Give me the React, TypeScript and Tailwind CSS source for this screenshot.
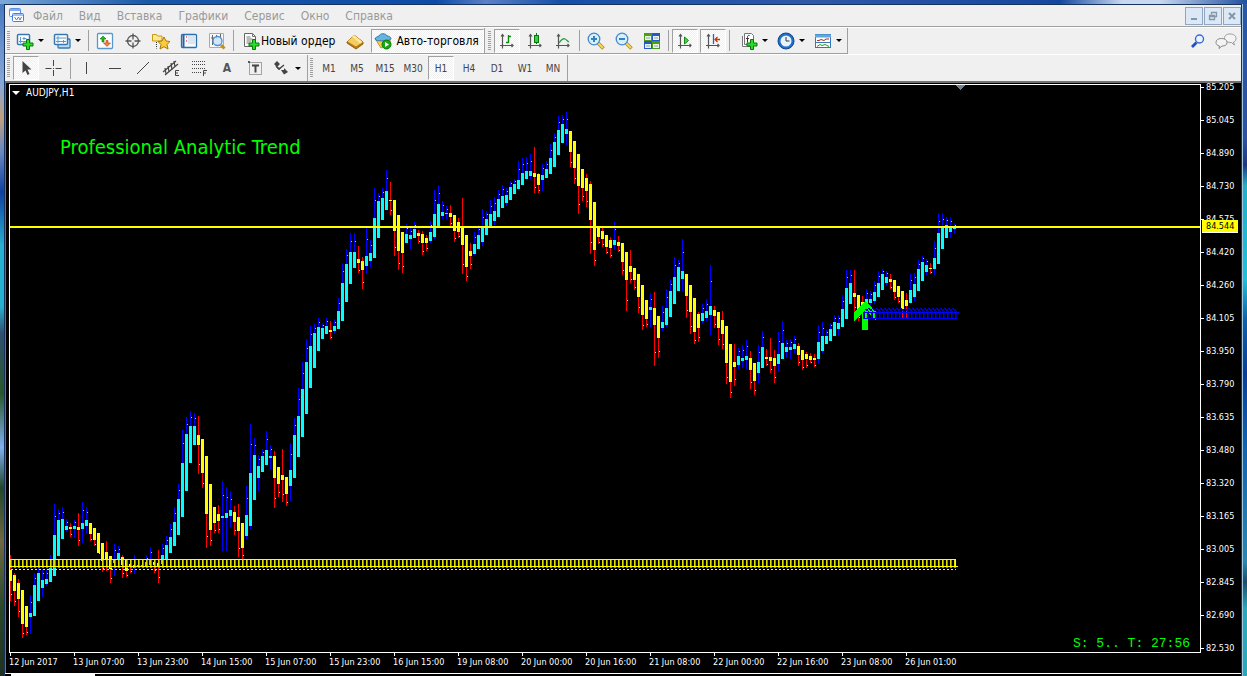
import type { ReactNode } from "react"

// [high, body top, body bottom, low, rising] in chart rows, one bar per 4px
type Bar = [number, number, number, number, 0 | 1]

const BARS: Bar[] = [
  [555, 570, 581, 601, 0], [573, 575, 591, 606, 0], [579, 583, 599, 617, 0], [590, 590, 624, 638, 0],
  [606, 606, 627, 635, 0], [595, 613, 617, 634, 1], [573, 585, 616, 616, 1], [566, 573, 601, 601, 1],
  [569, 580, 588, 597, 1], [569, 579, 584, 586, 1], [555, 568, 582, 582, 1], [504, 535, 576, 576, 1],
  [509, 520, 556, 556, 1], [507, 519, 539, 539, 1], [519, 526, 530, 532, 1], [523, 527, 529, 537, 0],
  [520, 526, 529, 538, 1], [513, 527, 530, 546, 0], [502, 523, 529, 543, 1], [507, 520, 526, 534, 1],
  [523, 523, 534, 541, 0], [528, 528, 540, 546, 0], [533, 533, 553, 553, 0], [543, 543, 561, 572, 0],
  [541, 552, 560, 571, 0], [556, 556, 569, 583, 0], [544, 560, 563, 576, 1], [546, 553, 559, 567, 1],
  [555, 557, 565, 578, 0], [559, 560, 571, 577, 0], [564, 564, 566, 573, 0], [555, 565, 568, 574, 1],
  [563, 565, 567, 567, 1], [561, 565, 567, 568, 1], [555, 562, 566, 567, 1], [547, 560, 565, 565, 1],
  [560, 562, 565, 573, 0], [550, 563, 566, 583, 0], [544, 555, 564, 567, 1], [536, 545, 560, 560, 1],
  [524, 537, 553, 553, 1], [507, 522, 546, 546, 1], [484, 499, 535, 535, 1], [430, 463, 517, 517, 1],
  [417, 434, 491, 491, 1], [411, 426, 463, 463, 1], [413, 426, 445, 445, 1], [416, 435, 445, 474, 0],
  [439, 439, 473, 488, 0], [456, 456, 514, 548, 0], [484, 484, 530, 546, 0], [507, 507, 523, 533, 0],
  [505, 514, 521, 533, 0], [481, 516, 518, 551, 1], [487, 513, 518, 551, 1], [491, 510, 516, 527, 1],
  [506, 512, 522, 535, 0], [504, 517, 531, 557, 0], [523, 523, 548, 559, 0], [486, 515, 536, 539, 1],
  [424, 473, 526, 530, 1], [438, 455, 500, 500, 1], [455, 466, 478, 491, 1], [449, 456, 472, 472, 1],
  [431, 450, 465, 465, 1], [445, 456, 458, 469, 1], [451, 456, 478, 508, 0], [467, 467, 484, 497, 0],
  [449, 475, 480, 502, 0], [477, 477, 494, 506, 0], [443, 470, 486, 501, 1], [418, 435, 478, 478, 1],
  [388, 416, 457, 457, 1], [362, 389, 437, 437, 1], [339, 362, 414, 414, 1], [326, 346, 388, 388, 1],
  [324, 333, 368, 368, 1], [318, 327, 351, 351, 1], [323, 328, 339, 339, 1], [318, 326, 334, 334, 1],
  [321, 330, 332, 339, 0], [319, 326, 331, 334, 1], [298, 311, 329, 329, 1], [263, 283, 321, 321, 1],
  [249, 264, 302, 302, 1], [233, 252, 284, 284, 1], [233, 252, 268, 268, 1], [246, 259, 263, 273, 0],
  [257, 261, 270, 289, 0], [227, 256, 266, 274, 1], [240, 253, 261, 267, 1], [188, 218, 258, 258, 1],
  [193, 201, 238, 238, 1], [188, 198, 220, 220, 1], [170, 191, 210, 210, 1], [182, 200, 201, 215, 0],
  [200, 200, 231, 256, 0], [215, 215, 251, 270, 0], [232, 232, 253, 273, 0], [224, 234, 243, 243, 1],
  [228, 235, 239, 249, 1], [222, 229, 238, 238, 1], [230, 233, 236, 244, 0], [231, 234, 243, 255, 0],
  [235, 238, 243, 251, 0], [221, 232, 241, 243, 1], [190, 214, 237, 239, 1], [185, 204, 226, 226, 1],
  [201, 212, 216, 219, 1], [206, 213, 214, 219, 1], [205, 213, 217, 226, 0], [215, 215, 231, 242, 0],
  [218, 222, 232, 238, 0], [198, 227, 245, 274, 0], [235, 235, 267, 281, 0], [243, 251, 256, 269, 0],
  [232, 244, 254, 255, 1], [225, 235, 249, 249, 1], [209, 228, 242, 246, 1], [211, 219, 235, 235, 1],
  [200, 214, 227, 227, 1], [197, 211, 221, 225, 1], [190, 199, 217, 217, 1], [185, 196, 208, 208, 1],
  [188, 195, 203, 206, 1], [181, 187, 200, 200, 1], [179, 184, 194, 194, 1], [161, 180, 189, 190, 1],
  [158, 173, 185, 185, 1], [157, 171, 179, 180, 1], [154, 171, 176, 179, 1], [147, 173, 177, 193, 0],
  [173, 174, 185, 193, 0], [164, 175, 180, 191, 1], [161, 169, 178, 178, 1], [144, 158, 174, 174, 1],
  [133, 142, 167, 167, 1], [116, 130, 155, 155, 1], [115, 124, 143, 143, 1], [112, 129, 134, 145, 1],
  [131, 131, 152, 167, 0], [141, 141, 168, 184, 0], [154, 154, 186, 214, 0], [169, 169, 188, 201, 0],
  [174, 178, 191, 207, 0], [181, 184, 220, 254, 0], [202, 202, 250, 266, 0], [227, 227, 237, 244, 0],
  [228, 231, 239, 247, 0], [235, 235, 247, 254, 0], [237, 240, 248, 258, 0], [222, 240, 245, 250, 1],
  [236, 242, 246, 252, 0], [243, 243, 262, 275, 0], [252, 252, 280, 311, 0], [250, 266, 272, 283, 0],
  [268, 268, 280, 290, 0], [274, 274, 297, 313, 0], [285, 285, 315, 330, 0], [300, 300, 319, 327, 0],
  [293, 307, 310, 327, 1], [292, 308, 325, 366, 0], [316, 316, 338, 358, 0], [306, 322, 328, 331, 1],
  [289, 308, 325, 327, 1], [279, 291, 317, 317, 1], [257, 277, 304, 304, 1], [260, 267, 291, 291, 1],
  [239, 271, 279, 291, 1], [274, 274, 296, 318, 0], [285, 285, 312, 334, 0], [298, 298, 332, 344, 0],
  [312, 314, 328, 342, 0], [304, 313, 321, 324, 1], [299, 311, 318, 321, 1], [265, 306, 315, 335, 1],
  [306, 310, 316, 328, 0], [312, 312, 328, 345, 0], [311, 320, 334, 349, 0], [326, 326, 363, 384, 0],
  [344, 344, 382, 398, 0], [344, 362, 367, 386, 0], [348, 356, 365, 369, 1], [345, 358, 361, 368, 1],
  [340, 356, 360, 369, 1], [351, 358, 370, 389, 0], [363, 363, 381, 395, 0], [345, 362, 373, 383, 1],
  [331, 347, 368, 368, 1], [349, 357, 359, 366, 0], [338, 357, 361, 373, 0], [350, 358, 366, 383, 0],
  [332, 354, 364, 372, 1], [321, 343, 359, 359, 1], [340, 347, 352, 358, 1], [339, 347, 350, 359, 1],
  [336, 344, 349, 353, 1], [343, 346, 355, 366, 0], [350, 350, 360, 370, 0], [352, 354, 359, 368, 0],
  [353, 356, 360, 363, 0], [354, 358, 360, 367, 0], [325, 342, 359, 364, 1], [322, 336, 351, 353, 1],
  [330, 336, 344, 344, 1], [323, 329, 341, 341, 1], [315, 322, 336, 336, 1], [315, 323, 329, 336, 1],
  [295, 309, 327, 327, 1], [270, 288, 319, 319, 1], [270, 283, 304, 304, 1], [270, 293, 297, 313, 0],
  [295, 295, 309, 321, 0], [296, 302, 310, 310, 0], [289, 299, 305, 305, 1], [291, 299, 303, 308, 1],
  [281, 292, 301, 304, 1], [271, 283, 297, 297, 1], [269, 274, 290, 290, 1], [271, 277, 283, 286, 1],
  [274, 279, 282, 289, 0], [280, 280, 292, 300, 0], [286, 286, 297, 303, 0], [291, 291, 310, 318, 0],
  [293, 300, 306, 318, 0], [274, 290, 303, 304, 1], [273, 284, 297, 301, 1], [260, 269, 291, 291, 1],
  [256, 262, 281, 281, 1], [259, 265, 272, 275, 1], [263, 268, 269, 274, 0], [241, 258, 269, 275, 1],
  [213, 233, 264, 264, 1], [213, 228, 249, 249, 1], [217, 225, 238, 238, 1], [217, 228, 232, 238, 1],
  [223, 228, 229, 234, 1],
]

const PRICES = [
  "85.205", "85.045", "84.890", "84.730", "84.575", "84.420", "84.260", "84.105", "83.950",
  "83.790", "83.635", "83.480", "83.320", "83.165", "83.005", "82.845", "82.690", "82.530",
]

const TIMES = [
  "12 Jun 2017", "13 Jun 07:00", "13 Jun 23:00", "14 Jun 15:00", "15 Jun 07:00",
  "15 Jun 23:00", "16 Jun 15:00", "19 Jun 08:00", "20 Jun 00:00", "20 Jun 16:00",
  "21 Jun 08:00", "22 Jun 00:00", "22 Jun 16:00", "23 Jun 08:00", "26 Jun 01:00",
]

const MENU = ["Файл", "Вид", "Вставка", "Графики", "Сервис", "Окно", "Справка"]
const FRAMES = ["M1", "M5", "M15", "M30", "H1", "H4", "D1", "W1", "MN"]

function Icon({ children, wide }: { children: ReactNode; wide?: boolean }) {
  return (
    <svg viewBox={wide ? "0 0 22 18" : "0 0 18 18"} className={wide ? "h-[18px] w-[22px] shrink-0" : "h-[18px] w-[18px] shrink-0"} fill="none" aria-hidden="true">
      {children}
    </svg>
  )
}

function Caret() {
  return <span className="border-x-3 border-t-3 border-x-transparent border-t-black" />
}

function Grip() {
  return (
    <span className="mx-0.5 h-5 w-[3px] shrink-0 bg-[repeating-linear-gradient(to_bottom,#a0a0a0_0_1px,#f0f0f0_1px_2px)]" />
  )
}

function Separator() {
  return <span className="mx-0.5 h-[21px] w-px shrink-0 bg-[#a0a0a0]" />
}

const PRESSED =
  "border border-t-[#a0a0a0] border-l-[#a0a0a0] border-r-white border-b-white bg-[repeating-conic-gradient(#fff_0_25%,#f0f0f0_0_50%)] bg-[size:2px_2px]"

function Tool({ label, pressed, children }: { label: string; pressed?: boolean; children: ReactNode }) {
  return (
    <button aria-label={label} aria-pressed={pressed} className="flex h-6 w-7 shrink-0 items-center justify-center">
      <span className={`flex h-6 w-[26px] items-center justify-center ${pressed ? PRESSED : ""}`}>{children}</span>
    </button>
  )
}

function DropTool({ label, children }: { label: string; children: ReactNode }) {
  return (
    <button aria-label={label} aria-haspopup="menu" className="flex h-6 w-[37px] shrink-0 items-center gap-1 pl-1">
      {children}
      <Caret />
    </button>
  )
}

const Plus = () => (
  <path d="M10.500 7.500h3v3.500H17v3h-3.500v3.500h-3V14H7v-3h3.500Z" fill="#28dc28" stroke="#087808" />
)

const Axes = () => (
  <g stroke="#555" strokeWidth="1.200">
    <path d="M4.500 3v13.500M2 13.500h13" />
    <path d="M3 4.500l1.500-2 1.500 2M13.500 12l1.500 1.500-1.500 1.500" />
  </g>
)

const Lens = ({ plus }: { plus?: boolean }) => (
  <Icon>
    <path d="M11 11l5.500 5.500" stroke="#b88818" strokeWidth="3.500" />
    <path d="M11 11l5 5" stroke="#f8d860" strokeWidth="1.800" />
    <circle cx="7" cy="7" r="5.800" fill="#d4f0fc" stroke="#4888cc" strokeWidth="1.300" />
    <path d="M4 7h6" stroke="#3880b8" strokeWidth="2" />
    {plus && <path d="M7 4v6" stroke="#3880b8" strokeWidth="2" />}
  </Icon>
)

function MenuBar() {
  return (
    <header className="flex h-[22px] items-center border-b border-[#a0a0a0] pl-1">
      <Icon>
        <rect x=".5" y="1.500" width="11" height="8" rx="1" fill="#fff" stroke="#5a8ee8" />
        <path d="M1 3h10" stroke="#5a8ee8" strokeWidth="1.500" />
        <rect x="3.500" y="6.500" width="11" height="8" rx="1" fill="#fff" stroke="#4680e0" />
        <path d="M4 8h10M5.500 10l2 3 2-3 1.500 3 1.500-3" stroke="#4680e0" />
      </Icon>
      <nav className="flex flex-1 gap-4 pl-[6px] text-[12px] text-[#999]">
        {MENU.map((item) => (
          <a key={item} href="#" className="leading-5">{item}</a>
        ))}
      </nav>
      <div className="flex gap-px">
        <button aria-label="Свернуть" className="flex h-[18px] w-[18px] items-center justify-center border border-[#8ea6bf] bg-[#dce8f5]">
          <svg viewBox="0 0 10 10" className="h-2.5 w-2.5"><path d="M2 7h6v2H2Z" fill="#8498ac" /></svg>
        </button>
        <button aria-label="Восстановить" className="flex h-[18px] w-[18px] items-center justify-center border border-[#8ea6bf] bg-[#dce8f5]">
          <svg viewBox="0 0 10 10" className="h-2.5 w-2.5" fill="none" stroke="#8498ac" strokeWidth="1.300"><path d="M3.500 3.500V1.500h5v4H7M1.500 4.500h5v4h-5ZM1.500 5.500h5" /></svg>
        </button>
        <button aria-label="Закрыть" className="flex h-[18px] w-[18px] items-center justify-center border border-[#8ea6bf] bg-[#dce8f5]">
          <svg viewBox="0 0 10 10" className="h-2.5 w-2.5"><path d="M2 2l6 6M8 2l-6 6" stroke="#8498ac" strokeWidth="2" /></svg>
        </button>
      </div>
    </header>
  )
}

function MainToolbar() {
  return (
    <div className="flex items-center justify-between border-t border-white">
      <div className="flex h-[26px]">
        <div className="flex items-center border-r border-b border-[#a0a0a0]">
          <Grip />
          <DropTool label="Новый график">
            <Icon>
              <rect x="1.500" y="2.500" width="12" height="10" rx="1" fill="#fff" stroke="#3878b0" strokeWidth="1.500" />
              <path d="M4.500 5v6M3 9.500h8M8 5v3M6.500 6.500h4" stroke="#5898d0" />
              <Plus />
            </Icon>
          </DropTool>
          <DropTool label="Профили">
            <Icon>
              <rect x="5" y="7" width="12" height="9" rx="1" fill="#b8dcf8" stroke="#3878b0" strokeWidth="1.300" />
              <rect x="1.500" y="2.500" width="13" height="10" rx="1" fill="#fff" stroke="#3878b0" strokeWidth="1.500" />
              <path d="M3 6h10M3 9.500h10M5 4v7M10.500 8v3" stroke="#5898d0" />
            </Icon>
          </DropTool>
          <Separator />
          <Tool label="Обзор рынка">
            <Icon>
              <rect x="1.500" y="1.500" width="15" height="15" rx="1" fill="#fff" stroke="#5898d0" strokeWidth="1.300" />
              <path d="M7 4l3 3H8v3H6V7H4Z" fill="#28b428" stroke="#087808" strokeWidth=".6" />
              <path d="M11 14.500l-3.500-3.500H10V8.500h2V11h2.500Z" fill="#f08040" stroke="#c03808" strokeWidth=".6" />
            </Icon>
          </Tool>
          <Tool label="Окно данных">
            <Icon>
              <circle cx="9" cy="9" r="5.500" stroke="#555" strokeWidth="1.300" />
              <path d="M9 1.500v6M9 10.500v6M1.500 9h6M10.500 9h6" stroke="#555" strokeWidth="1.300" />
            </Icon>
          </Tool>
          <Tool label="Навигатор">
            <Icon>
              <path d="M.5 2.500h4l1 1.500H10v5H.5Z" fill="#fce890" stroke="#c89818" />
              <path d="M4.500 10v6.500" stroke="#333" strokeDasharray="1 1" />
              <path d="M12 5l2 4 4 .5-3 3 1 4.500-4-2.300L8 17l1-4.500-3-3 4-.5Z" fill="#fccc38" stroke="#a87808" />
            </Icon>
          </Tool>
          <Tool label="Терминал">
            <Icon>
              <rect x="1.500" y="2.500" width="15" height="13" rx="1" fill="#f4faff" stroke="#2870b0" strokeWidth="1.300" />
              <path d="M3.500 3v12" stroke="#2860a0" strokeWidth="2" />
              <path d="M6 5h1M6 9h1" stroke="#f00" />
              <path d="M8 5h7M8 7h7M8 9h7M8 11h7" stroke="#c8d0dc" />
            </Icon>
          </Tool>
          <Tool label="Тестер стратегий">
            <Icon>
              <path d="M1.500 1.500h14v14h-14Z" fill="#f8f8f8" stroke="#aaa" />
              <path d="M4.500 3v10M3 6h3M12.500 2v5M8.500 3v4" stroke="#666" />
              <path d="M13 13l3.500 3.500" stroke="#c09018" strokeWidth="3" />
              <circle cx="9.500" cy="9" r="4.500" fill="#c8e4fce0" stroke="#5090d0" strokeWidth="1.300" />
            </Icon>
          </Tool>
          <Separator />
          <button className="flex h-6 shrink-0 items-center gap-px px-1.5 text-[12px] text-black">
            <Icon>
              <path d="M2.500 1.500h8l3 3v10h-11Z" fill="#fff" stroke="#666" />
              <path d="M10.500 1.500v3h3M4.500 5h4M4.500 7h6M4.500 9h5M4.500 11h3" stroke="#777" />
              <Plus />
            </Icon>
            Новый ордер
          </button>
          <Tool label="Редактор MetaEditor">
            <Icon>
              <path d="M1 10l7-7 9 7v2L10 17l-9-6Z" fill="#b87c10" stroke="#94600c" />
              <path d="M1.500 9.500l6.500-6.500 8.500 7-6.500 4.500Z" fill="#f4cc60" />
              <path d="M8 3l8.500 7-2.500 1.500-8-7Z" fill="#fce8a0" />
            </Icon>
          </Tool>
          <button aria-pressed="true" className={`ml-0.5 flex h-6 shrink-0 items-center gap-1 px-[2px] text-[12px] text-black ${PRESSED}`}>
            <Icon>
              <path d="M2 8l5 8 9-5V8Z" fill="#f8d048" stroke="#c89018" />
              <path d="M1 7c0-2 3-2 4-3 1-3 7-3 8 0 2 0 4 1 4 3s-16 3-16 0Z" fill="#68b4e0" stroke="#3078a8" />
              <circle cx="12.500" cy="12.500" r="4.500" fill="#18a818" stroke="#087808" />
              <path d="M11 10l4 2.500-4 2.500Z" fill="#fff" />
            </Icon>
            <span className="pr-0.5">Авто-торговля</span>
          </button>
        </div>
        <div className="flex items-center border-r border-b border-[#a0a0a0] pl-px">
          <Grip />
          <Tool label="Бары" pressed>
            <Icon><Axes /><path d="M10.500 3v8M8 10.500h2.500M10.500 4.500H13" stroke="#108810" strokeWidth="1.400" /></Icon>
          </Tool>
          <Tool label="Свечи">
            <Icon><Axes /><path d="M10.500 1v11" stroke="#087808" /><rect x="8.500" y="3.500" width="4" height="7" fill="#30d050" stroke="#087808" /></Icon>
          </Tool>
          <Tool label="Линия">
            <Icon><Axes /><path d="M5 11c2-3 4-5 6-4s2 2 4 3" stroke="#30a040" strokeWidth="1.300" /></Icon>
          </Tool>
          <Separator />
          <Tool label="Увеличить"><Lens plus /></Tool>
          <Tool label="Уменьшить"><Lens /></Tool>
          <Tool label="Расположить окна">
            <Icon>
              <path d="M1 1h8v8H1ZM9 9h8v8H9Z" fill="#4c9c18" />
              <path d="M9 1h8v8H9ZM1 9h8v8H1Z" fill="#2858c8" />
              <path d="M2 4h6v4H2ZM10 4h6v4h-6ZM2 12h6v4H2ZM10 12h6v4h-6Z" fill="#e8f4e8" />
              <path d="M3 6h4M11 6h4M3 14h4M11 14h4" stroke="#88a8b8" />
            </Icon>
          </Tool>
          <Separator />
          <Tool label="Автопрокрутка" pressed>
            <Icon><Axes /><path d="M8.500 5l4 3.500-4 3.500Z" fill="#50d060" stroke="#108810" /></Icon>
          </Tool>
          <Tool label="Сдвиг графика" pressed>
            <Icon><Axes /><path d="M9.500 2v10" stroke="#2868a8" strokeWidth="1.300" /><path d="M16 7.500h-5M13.500 5l-2.500 2.500 2.500 2.500" stroke="#c83808" strokeWidth="1.300" /></Icon>
          </Tool>
          <Separator />
          <span className="w-1" />
          <DropTool label="Индикаторы">
            <Icon>
              <path d="M4.500 1.500h7l2 2v9h-9ZM2.500 4v10.500h8" fill="#fff" stroke="#777" />
              <path d="M9.500 3.500c-2-.5-2 1-2 2v5M6 6.500h3" stroke="#333" />
              <Plus />
            </Icon>
          </DropTool>
          <DropTool label="Периоды">
            <Icon>
              <circle cx="9" cy="9" r="8" fill="#2070c8" stroke="#104890" />
              <circle cx="9" cy="9" r="5.500" fill="#e8f4fc" />
              <path d="M9 5v4h3.500" stroke="#333" />
            </Icon>
          </DropTool>
          <DropTool label="Шаблоны">
            <Icon>
              <rect x="1.500" y="2.500" width="15" height="13" fill="#fff" stroke="#3878b8" />
              <path d="M1 4h16" stroke="#60a8e0" strokeWidth="3" />
              <path d="M2 10.500h14" stroke="#3878b8" />
              <path d="M3 8.500h2l2-1 3 1 2-1.500h3" stroke="#a83018" />
              <path d="M3 14.500l3-2 2 1 3-1 4 2" stroke="#289828" />
            </Icon>
          </DropTool>
        </div>
      </div>
      <div className="flex items-center gap-2 pr-1">
        <button aria-label="Поиск">
          <Icon>
            <path d="M7.500 10.500L3 15" stroke="#2050c0" strokeWidth="2.800" />
            <circle cx="10.500" cy="7" r="4" fill="#eef4ff" stroke="#3868d8" strokeWidth="1.400" />
          </Icon>
        </button>
        <button aria-label="Чат">
          <Icon wide>
            <path d="M15 2c4 0 6 2 6 4.500 0 2-1 3-2.500 3.500l1 3-3-2.500c-5 0-7-1.500-7-4C9.500 4 11 2 15 2Z" fill="#f4f4f4" stroke="#999" />
            <path d="M6.500 6.500c3.500 0 5.500 1.500 5.500 4s-2 3.500-5 3.500L4 16.500 4.500 14C2 13.500 1 12 1 10.500c0-2.500 2-4 5.500-4Z" fill="#f4f4f4" stroke="#888" />
          </Icon>
        </button>
      </div>
    </div>
  )
}

function DrawToolbar() {
  return (
    <div className="flex h-[27px] border-t border-white text-[10px] text-[#444]">
      <div className="flex items-center border-r border-[#a0a0a0] pr-px">
        <Grip />
        <Tool label="Курсор" pressed>
          <Icon><path d="M5.500 2v12l3-2.500 2 4.500 2-1-2-4.500h4Z" fill="#444" /></Icon>
        </Tool>
        <Tool label="Перекрестие">
          <Icon><path d="M8.500 1v6M8.500 11v6M.5 9.500h6M10.500 9.500h6" stroke="#444" /><path d="M8 9h1v1H8Z" fill="#444" /></Icon>
        </Tool>
        <Separator />
        <Tool label="Вертикальная линия"><Icon><path d="M8.500 3v12" stroke="#444" /></Icon></Tool>
        <Tool label="Горизонтальная линия"><Icon><path d="M3 9.500h12" stroke="#444" /></Icon></Tool>
        <Tool label="Трендовая линия"><Icon><path d="M3 15L15 3" stroke="#444" /></Icon></Tool>
        <Tool label="Равноудаленный канал">
          <Icon>
            <path d="M1 13L14 2M3 16L16 5M3 9l1 6M6 7l1 6M9 4l1 7M12 2l1 6" stroke="#444" strokeWidth="1.200" />
            <path d="M17 11.500h-3.500v5H17M13.500 14H16" stroke="#444" />
          </Icon>
        </Tool>
        <Tool label="Линии Фибоначчи">
          <Icon>
            <path d="M2 2.500h14M2 5.500h14M2 9.500h14M2 13.500h9" stroke="#444" strokeDasharray="1 1" />
            <path d="M17 11.500h-3.500V17M13.500 14H16" stroke="#444" />
          </Icon>
        </Tool>
        <Tool label="Текст"><span className="text-[12px] font-bold text-[#555]">A</span></Tool>
        <Tool label="Текстовая метка">
          <Icon>
            <rect x="3.500" y="3.500" width="12" height="12" stroke="#555" strokeDasharray="1 1" />
            <path d="M6 6.500h7M9.500 6v7.500" stroke="#444" strokeWidth="2" />
            <path d="M2 2h2v2H2Z" fill="#555" />
          </Icon>
        </Tool>
        <DropTool label="Стрелки">
          <Icon>
            <path d="M4 2l3 3-3 3-3-3ZM3 8l3 3 2-2" fill="#444" />
            <path d="M3 7l3 3 5-4" stroke="#444" strokeWidth="1.400" />
            <path d="M8 11h3V9l4 4-4 2.500Z" fill="#444" />
          </Icon>
        </DropTool>
      </div>
      <div className="flex items-center border-r border-[#a0a0a0]">
        <Grip />
        {FRAMES.map((f) => (
          <Tool key={f} label={f} pressed={f === "H1"}>{f}</Tool>
        ))}
      </div>
    </div>
  )
}

function Candle({ bar, i }: { bar: Bar; i: number }) {
  const [high, top, bottom, low, up] = bar
  const x = 10 + i * 4
  const closeY = up ? Math.round(high + (top - high) * 0.4) : Math.round(low - (low - bottom) * 0.35)
  return (
    <g>
      <path d={`M${x} ${high}h1V${low}h-1Z`} fill={up ? "#0000ff" : "#ff0000"} />
      <path d={`M${x + 1} ${closeY}h1v1h-1Z`} fill={up ? "#40ffff" : "#ffff40"} />
      <path d={`M${x - 1} ${top}h3V${Math.max(bottom, top + 1)}h-3Z`} fill={up ? "#00ffff" : "#ffff00"} />
    </g>
  )
}

function Plot() {
  return (
    <svg className="block h-[567px] w-full" shapeRendering="crispEdges" role="img" aria-label="AUDJPY, H1">
      <defs>
        <pattern id="support" width="4" height="9" patternUnits="userSpaceOnUse" x="9" y="559">
          <path d="M1 0h1v9H1Z" fill="#e0e000" />
          <path d="M2 0h1v9H2Z" fill="#6a9a00" />
        </pattern>
        <pattern id="zone" width="4" height="6" patternUnits="userSpaceOnUse" x="862" y="312">
          <path d="M1 0h1v6H1Z" fill="#0000ff" />
          <path d="M2 0h1v6H2Z" fill="#000090" />
        </pattern>
        <pattern id="zigzag" width="4" height="4" patternUnits="userSpaceOnUse" x="864" y="308">
          <path d="M0 0h2v1H0ZM1 1h2v1H1ZM2 2h2v1H2ZM0 3h1v1H0ZM3 1h1v1H3Z" fill="#0000c8" />
        </pattern>
      </defs>
      <g transform="translate(-10 -85)">
        {BARS.map((bar, i) => (
          <Candle key={i} bar={bar} i={i} />
        ))}

        {/* Support band */}
        <path d="M10 559h946v8H10Z" fill="url(#support)" />
        <path d="M10 559h946v1H10ZM955 559h1v8h-1Z" fill="#ffff00" />
        <path d="M10 566.500h948" stroke="#ffff00" />
        <path d="M10 567.500h946" stroke="#c07800" strokeDasharray="2 2" />
        <path d="M11 569.500h945" stroke="#ffff00" strokeDasharray="2 2" />

        {/* Buy arrow and entry zone */}
        <path d="M865 301l-11 11v9l8-8v17h6v-17l8 8v-9Z" fill="#00ff00" />
        <path d="M863 312h94v7h-94Z" fill="url(#zone)" />
        <path d="M866 308h90l3 4h-96Z" fill="url(#zigzag)" />
        <path d="M863 312.500h96M863 318.500h94" stroke="#0000ff" />

        <path d="M956 85h9l-4.500 5Z" fill="#708090" />
      </g>
      <rect y="141" width="100%" height="2" fill="#ffff00" />
    </svg>
  )
}

function Chart() {
  return (
    <main className="flex flex-1 border-t-2 border-l border-[#707070] bg-black pt-px pl-[3px] text-[10px] text-white">
      <div className="flex-1">
        <div className="relative border border-white">
          <Plot />
          <div className="absolute top-0 left-0.5 flex items-center gap-1.5 leading-4">
            <span className="border-x-4 border-t-4 border-x-transparent border-t-white" />
            AUDJPY,H1
          </div>
          <p className="absolute top-12 left-[50px] text-[20px] leading-7 text-[#00ff00]">Professional Analytic Trend</p>
          <p className="absolute right-2.5 bottom-0 font-['Liberation_Mono',monospace] text-[13px] leading-4 whitespace-pre text-[#00ff00]">S: 5.. T: 27:56</p>
        </div>
        <div className="flex text-[9px]">
          {TIMES.map((t) => (
            <div key={t} className="w-16 shrink-0 whitespace-nowrap">
              <span className="ml-px block h-[3px] w-px bg-white" />
              <span className="block leading-3">{t}</span>
            </div>
          ))}
        </div>
      </div>
      <aside className="relative -mt-[13px] w-10 shrink-0 text-[9px]">
        {PRICES.map((p) => (
          <div key={p} className="flex h-[33px] items-center gap-0.5">
            <span className="h-px w-[3px] bg-white" />
            {p}
          </div>
        ))}
        <div className="absolute top-[149px] left-px w-9 border-b border-white bg-[#ffff00] pl-1 leading-[12px] text-black">84.544</div>
      </aside>
    </main>
  )
}

export default function App() {
  return (
    <div className="flex min-h-screen flex-col bg-black font-['DejaVu_Sans_Condensed','DejaVu_Sans',sans-serif]">
      <div className="h-1 bg-[linear-gradient(to_right,#7aa8d8,#1858a8_12%,#0c4ca8_35%,#5c80c8_39%,#1450a8_45%,#3058a8_65%,#1448a0_85%,#c8d8f0_90%,#c8d8f0_93%,#2050a0)]" />
      <div className="flex flex-1">
        <div className="w-1 shrink-0 bg-[linear-gradient(to_bottom,#4878c0,#88a8d8_12%,#c0a080_17%,#6888c0_22%,#1040a0_28%,#28b0d0_36%,#28b0d0_45%,#305070_49%,#285828_58%,#80b0f0_66%,#204828_72%,#706840_80%,#284828_90%,#203020)]" />
        <div className="flex flex-1 flex-col border-x border-t border-[#18305c] bg-[#f0f0f0]">
          <MenuBar />
          <MainToolbar />
          <DrawToolbar />
          <Chart />
          <div className="h-[3px] border-t border-white bg-black">
            <div className="ml-1.5 h-0.5 w-[84px] bg-white" />
          </div>
        </div>
        <div className="w-[5px] shrink-0 border-l border-[#a0c8e0] bg-[linear-gradient(to_bottom,#2858a8,#3050a0_20%,#203880_24%,#20b0c8_27%,#20c0d8_41%,#1060a8_47%,#0c3c98_55%,#1060b0_65%,#2888b0_83%,#204c68_86%,#28a8b8_90%)]" />
      </div>
    </div>
  )
}
